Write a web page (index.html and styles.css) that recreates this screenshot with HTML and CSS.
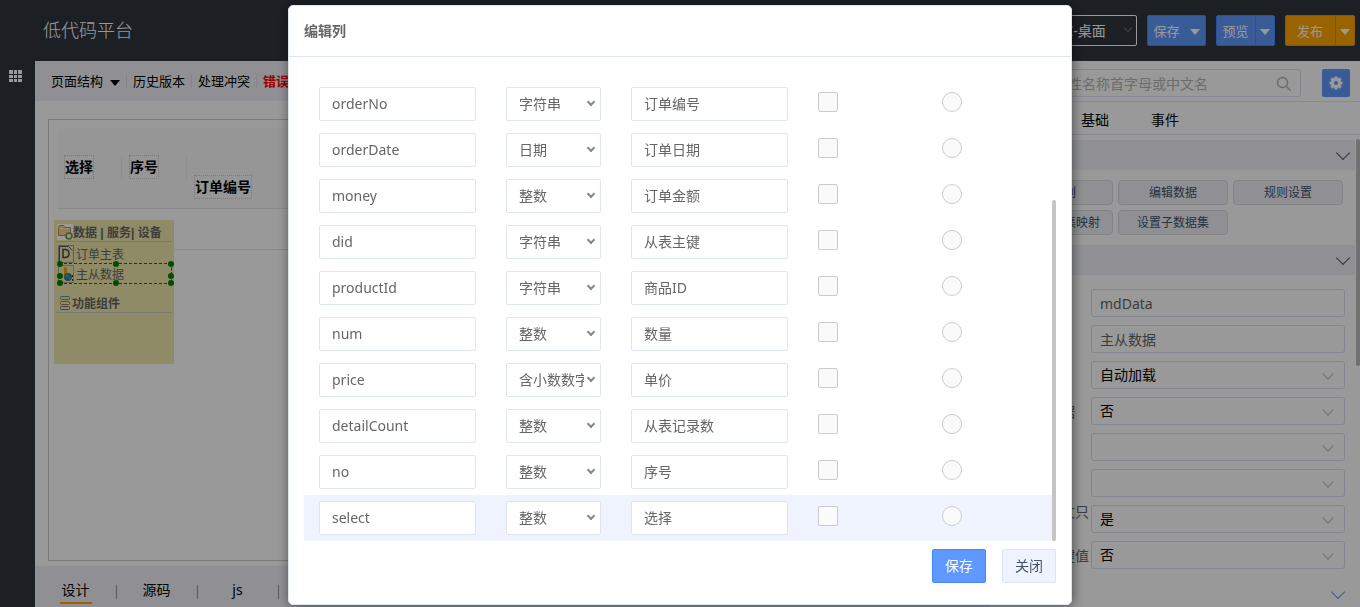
FILE: index.html
```html
<!DOCTYPE html>
<html lang="zh-CN">
<head>
  <meta charset="utf-8">
  <title>低代码平台</title>
  <link rel="stylesheet" href="styles.css">
</head>
<body>
  <header class="header">
    <h1 class="logo">低代码平台</h1>
    <div class="header-actions">
      <div class="select-box dark">
        <select aria-label="页面类型">
          <option>PC-桌面</option>
        </select>
      </div>
      <div class="split-button">
        <button type="button">保存</button>
        <button type="button" class="caret" aria-label="更多保存"></button>
      </div>
      <div class="split-button divided">
        <button type="button">预览</button>
        <button type="button" class="caret" aria-label="更多预览"></button>
      </div>
      <div class="split-button divided orange">
        <button type="button">发布</button>
        <button type="button" class="caret" aria-label="更多发布"></button>
      </div>
    </div>
  </header>

  <div class="main">
    <nav class="sidebar">
      <button type="button" aria-label="菜单">
        <svg width="13" height="13" viewBox="0 0 13 13" fill="#fff">
          <path d="M0 0h4v4H0zM5 0h3v4H5zM9 0h4v4H9zM0 5h4v3H0zM5 5h3v3H5zM9 5h4v3H9zM0 9h4v3H0zM5 9h3v3H5zM9 9h4v3H9z"/>
        </svg>
      </button>
    </nav>

    <section class="workspace">
      <div class="toolbar">
        <a href="#" class="with-caret">页面结构</a>
        <a href="#">历史版本</a>
        <a href="#">处理冲突</a>
        <a href="#" class="error">错误</a>
      </div>

      <div class="canvas">
        <div class="grid-head">
          <div class="grid-col"><span>选择</span></div>
          <div class="grid-col"><span>序号</span></div>
          <div class="grid-col last"><span>订单编号</span></div>
        </div>
        <div class="grid-row"></div>

        <!-- Panneau flottant des composants de données -->
        <div class="data-panel">
          <h2 class="data-title">
            <svg width="16" height="16" viewBox="0 0 16 16">
              <path fill="#fff" d="M0 0h16v16H0z"/>
              <path fill="#f7cf8b" stroke="#b78a45" d="M1.500 11.500v-8l1-2h4l1 2h6v8z"/>
              <path fill="none" stroke="#fff0c8" d="M2.500 4.500h10"/>
              <circle cx="12" cy="12" r="3" fill="#e4f3d6" stroke="#639648" stroke-width="1.500"/>
            </svg>
            数据 | 服务| 设备
          </h2>
          <ul class="data-list">
            <li>
              <svg width="16" height="18" viewBox="0 0 16 18">
                <path fill="#eee8aa" stroke="#999" d="M.5.5h15v17H.5z"/>
                <path fill="none" stroke="#555" d="M1.500 17V1.500h9l4 4"/>
                <path fill="none" stroke="#444" stroke-width="1.500" d="M5 4.500v8h2q4 0 4-4t-4-4z"/>
              </svg>
              订单主表
            </li>
            <li class="selected">
              <svg width="16" height="18" viewBox="0 0 16 18">
                <path fill="#eee8aa" stroke="#aaa" d="M.5.5h15v17H.5z"/>
                <path fill="#e8a51d" d="M4 1l5 2v7H4z"/>
                <path fill="#ffe28c" d="M4 1h2v9H4z"/>
                <circle cx="10" cy="12" r="4" fill="#3375ad"/>
                <path fill="#59a848" d="M8 9l3 1-1 3-3-1zM11 12l3 1-3 3z"/>
                <path fill="#333" d="M14 10h1v2h-1zM14 14h1v2h-1z"/>
              </svg>
              主从数据
              <i class="handle nw"></i><i class="handle n"></i><i class="handle ne"></i>
              <i class="handle w"></i><i class="handle e"></i>
              <i class="handle sw"></i><i class="handle s"></i><i class="handle se"></i>
            </li>
          </ul>
          <h2 class="data-title tools">
            <svg width="10" height="14" viewBox="0 0 10 14" fill="none">
              <rect x=".5" y=".5" width="9" height="3" rx="1" stroke="#4c968a"/>
              <rect x=".5" y="5.500" width="9" height="3" rx="1" stroke="#b27824"/>
              <rect x=".5" y="10.500" width="9" height="3" rx="1" stroke="#566eb5"/>
            </svg>
            功能组件
          </h2>
        </div>
      </div>

      <div class="view-tabs">
        <a href="#" class="active"><span>设计</span></a>
        <a href="#"><span>源码</span></a>
        <a href="#"><span>js</span></a>
        <a href="#"><span>css</span></a>
      </div>
    </section>

    <aside class="props">
      <div class="search-row">
        <div class="search">
          <input type="text" placeholder="请输入属性名称首字母或中文名" aria-label="搜索属性">
          <svg width="16" height="16" viewBox="0 0 16 16" fill="none" stroke="#b5b5b5" stroke-width="1.500">
            <circle cx="6.500" cy="6.500" r="5"/>
            <path d="M10.500 10.500l4 4"/>
          </svg>
        </div>
        <button type="button" class="gear" aria-label="设置">
          <svg width="14" height="14" viewBox="0 0 14 14">
            <g stroke="#fff" stroke-width="3">
              <path d="M7 .5v13M.5 7h13M2.400 2.400l9.200 9.200M11.600 2.400l-9.200 9.200"/>
            </g>
            <circle cx="7" cy="7" r="5" fill="#fff"/>
            <circle cx="7" cy="7" r="2" fill="#5f99ff"/>
          </svg>
        </button>
      </div>
      <div class="prop-tabs">
        <a href="#">常用</a>
        <a href="#">基础</a>
        <a href="#">事件</a>
      </div>
      <div class="prop-body">
        <div class="section-head"><i class="chevron"></i></div>
        <div class="prop-buttons">
          <button type="button">编辑列</button>
          <button type="button">编辑数据</button>
          <button type="button">规则设置</button>
          <button type="button">设置数据集映射</button>
          <button type="button">设置子数据集</button>
        </div>
        <div class="section-head"><i class="chevron"></i></div>
        <div class="prop-form">
          <label for="propId">标识</label>
          <input type="text" id="propId" value="mdData">
          <label for="propName">名称</label>
          <input type="text" id="propName" value="主从数据">
          <label for="propLoad">加载方式</label>
          <div class="select-box"><select id="propLoad"><option>自动加载</option></select></div>
          <label for="propEmpty">允许空数据</label>
          <div class="select-box"><select id="propEmpty"><option>否</option></select></div>
          <label for="propMaster">主数据</label>
          <div class="select-box"><select id="propMaster"><option></option></select></div>
          <label for="propRelation">关联列</label>
          <div class="select-box"><select id="propRelation"><option></option></select></div>
          <label for="propReadonly">数据集中文只读</label>
          <div class="select-box"><select id="propReadonly"><option>是</option></select></div>
          <label for="propKey" class="short">主键值</label>
          <div class="select-box"><select id="propKey"><option>否</option></select></div>
        </div>
        <div class="more"><i class="chevron"></i></div>
        <div class="prop-scroll"></div>
      </div>
    </aside>
  </div>

  <!-- Fenêtre d'édition des colonnes -->
  <div class="overlay">
    <div class="dialog" role="dialog" aria-labelledby="dialogTitle">
      <h2 class="dialog-title" id="dialogTitle">编辑列</h2>
      <div class="dialog-body">
        <table class="columns">
          <colgroup>
            <col class="col-name"><col class="col-type"><col class="col-label"><col class="col-check"><col>
          </colgroup>
          <tbody>
            <tr>
              <td><input type="text" value="orderNo" aria-label="列名"></td>
              <td><div class="type-box"><select aria-label="类型"><option>字符串</option></select></div></td>
              <td><input type="text" value="订单编号" aria-label="显示名称"></td>
              <td class="pick"><input type="checkbox" aria-label="只读"></td>
              <td class="pick"><input type="radio" name="idColumn" aria-label="主键"></td>
            </tr>
            <tr>
              <td><input type="text" value="orderDate" aria-label="列名"></td>
              <td><div class="type-box"><select aria-label="类型"><option>日期</option></select></div></td>
              <td><input type="text" value="订单日期" aria-label="显示名称"></td>
              <td class="pick"><input type="checkbox" aria-label="只读"></td>
              <td class="pick"><input type="radio" name="idColumn" aria-label="主键"></td>
            </tr>
            <tr>
              <td><input type="text" value="money" aria-label="列名"></td>
              <td><div class="type-box"><select aria-label="类型"><option>整数</option></select></div></td>
              <td><input type="text" value="订单金额" aria-label="显示名称"></td>
              <td class="pick"><input type="checkbox" aria-label="只读"></td>
              <td class="pick"><input type="radio" name="idColumn" aria-label="主键"></td>
            </tr>
            <tr>
              <td><input type="text" value="did" aria-label="列名"></td>
              <td><div class="type-box"><select aria-label="类型"><option>字符串</option></select></div></td>
              <td><input type="text" value="从表主键" aria-label="显示名称"></td>
              <td class="pick"><input type="checkbox" aria-label="只读"></td>
              <td class="pick"><input type="radio" name="idColumn" aria-label="主键"></td>
            </tr>
            <tr>
              <td><input type="text" value="productId" aria-label="列名"></td>
              <td><div class="type-box"><select aria-label="类型"><option>字符串</option></select></div></td>
              <td><input type="text" value="商品ID" aria-label="显示名称"></td>
              <td class="pick"><input type="checkbox" aria-label="只读"></td>
              <td class="pick"><input type="radio" name="idColumn" aria-label="主键"></td>
            </tr>
            <tr>
              <td><input type="text" value="num" aria-label="列名"></td>
              <td><div class="type-box"><select aria-label="类型"><option>整数</option></select></div></td>
              <td><input type="text" value="数量" aria-label="显示名称"></td>
              <td class="pick"><input type="checkbox" aria-label="只读"></td>
              <td class="pick"><input type="radio" name="idColumn" aria-label="主键"></td>
            </tr>
            <tr>
              <td><input type="text" value="price" aria-label="列名"></td>
              <td><div class="type-box"><select aria-label="类型"><option>含小数数字</option></select></div></td>
              <td><input type="text" value="单价" aria-label="显示名称"></td>
              <td class="pick"><input type="checkbox" aria-label="只读"></td>
              <td class="pick"><input type="radio" name="idColumn" aria-label="主键"></td>
            </tr>
            <tr>
              <td><input type="text" value="detailCount" aria-label="列名"></td>
              <td><div class="type-box"><select aria-label="类型"><option>整数</option></select></div></td>
              <td><input type="text" value="从表记录数" aria-label="显示名称"></td>
              <td class="pick"><input type="checkbox" aria-label="只读"></td>
              <td class="pick"><input type="radio" name="idColumn" aria-label="主键"></td>
            </tr>
            <tr>
              <td><input type="text" value="no" aria-label="列名"></td>
              <td><div class="type-box"><select aria-label="类型"><option>整数</option></select></div></td>
              <td><input type="text" value="序号" aria-label="显示名称"></td>
              <td class="pick"><input type="checkbox" aria-label="只读"></td>
              <td class="pick"><input type="radio" name="idColumn" aria-label="主键"></td>
            </tr>
            <tr class="current">
              <td><input type="text" value="select" aria-label="列名"></td>
              <td><div class="type-box"><select aria-label="类型"><option>整数</option></select></div></td>
              <td><input type="text" value="选择" aria-label="显示名称"></td>
              <td class="pick"><input type="checkbox" aria-label="只读"></td>
              <td class="pick"><input type="radio" name="idColumn" aria-label="主键"></td>
            </tr>
          </tbody>
        </table>
        <div class="dialog-scroll"></div>
      </div>
      <div class="dialog-footer">
        <button type="button" class="primary">保存</button>
        <button type="button">关闭</button>
      </div>
    </div>
  </div>
</body>
</html>
```
FILE: styles.css
```css
*, *::before, *::after {
  box-sizing: border-box;
}

body {
  margin: 0;
  height: 100vh;
  display: flex;
  flex-direction: column;
  overflow: hidden;
  font-family: "Noto Sans", "Noto Sans CJK SC", sans-serif;
  font-size: 14px;
  color: #000;
  background: #fff;
}

button, input, select {
  font-family: inherit;
  font-size: inherit;
  margin: 0;
}

a {
  color: inherit;
  text-decoration: none;
}

select {
  appearance: none;
  display: block;
  width: 100%;
}

/* En-tête */
.header {
  display: flex;
  justify-content: space-between;
  align-items: center;
  flex: none;
  height: 61px;
  padding: 0 5px 0 43px;
  background: #2f343c;
  color: #fff;
}

.logo {
  margin: 0;
  padding-bottom: 3px;
  font-size: 18px;
  font-weight: 300;
}

.header-actions {
  display: flex;
  gap: 10px;
}

.split-button {
  display: flex;
  height: 31px;
  border: 1px solid #4587ff;
  border-radius: 2px;
  background: #5f99ff;
}

.split-button button {
  width: 38px;
  padding: 0 1px 1px 0;
  border: 0;
  background: none;
  color: #fff;
  font-size: 13px;
}

.split-button .caret {
  width: 19px;
}

.split-button.orange {
  background: #ffa500;
  border-color: #e29400;
}

.split-button.orange button:first-child {
  width: 49px;
}

.split-button.divided .caret {
  border-left: 1px solid #4587ff;
}

.split-button.orange .caret {
  border-color: #d48b00;
}

.caret::before, .with-caret::after {
  content: "";
  display: inline-block;
  border: 5px solid transparent;
  border-top: 6px solid;
  border-bottom: 0;
  vertical-align: middle;
}

.select-box {
  position: relative;
}

.select-box::after {
  content: "";
  position: absolute;
  right: 13px;
  top: 9px;
  width: 8px;
  height: 8px;
  border: solid #bbb;
  border-width: 0 1px 1px 0;
  transform: rotate(45deg);
}

.select-box.dark {
  width: 120px;
}

.select-box.dark::after {
  right: 6px;
  top: 10px;
  width: 6px;
  height: 6px;
  border-color: #6b6f76;
}

.select-box.dark select {
  height: 31px;
  padding: 0 12px 0 38px;
  border: 1px solid #fff;
  border-radius: 2px;
  background: none;
  color: #fff;
}

.main {
  display: flex;
  flex: 1;
  min-height: 0;
}

.sidebar {
  flex: none;
  width: 35px;
  padding: 9px;
  background: #2f343c;
}

.sidebar button {
  display: block;
  padding: 0;
  border: 0;
  background: none;
}

.sidebar svg {
  display: block;
}

/* Zone de travail */
.workspace {
  display: flex;
  flex-direction: column;
  flex: 1;
  min-width: 0;
}

.toolbar {
  display: flex;
  align-items: center;
  flex: none;
  height: 40px;
  padding-left: 9px;
  background: #f0f1f7;
  font-size: 13px;
}

.toolbar a {
  padding: 0 6px;
  line-height: 14px;
  border-right: 1px solid #dcdfe8;
}

.toolbar .with-caret {
  padding-left: 7px;
}

.with-caret::after {
  margin-left: 7px;
}

.toolbar .error {
  color: #f00;
  font-weight: bold;
  border: 0;
}

.canvas {
  position: relative;
  flex: 1;
  margin: 18px 13px 5px;
  padding: 8px;
  border: 1px solid #ccc;
}

.grid-head {
  display: flex;
  height: 81px;
  padding: 27px 7px;
  border-bottom: 1px solid #e4e4e4;
  border-radius: 6px 6px 0 0;
  background: #fafafa;
  font-weight: bold;
}

.grid-col {
  width: 65px;
  height: 24px;
}

.grid-col:not(.last) {
  background: linear-gradient(#ebebeb, #ebebeb) 57px 2px / 1px 22px no-repeat;
}

.grid-col span {
  display: inline-block;
  line-height: 22px;
  border: 1px dotted #ccc;
  white-space: nowrap;
}

.grid-col.last {
  padding-top: 20px;
}

.grid-row {
  height: 41px;
  border-bottom: 1px solid #e4e4e4;
}

.data-panel {
  position: absolute;
  left: 5px;
  top: 100px;
  width: 120px;
  height: 144px;
  padding: 2px;
  background: #eee8aa;
  color: #666;
  font-size: 12px;
}

.data-title {
  display: flex;
  align-items: center;
  margin: 0;
  height: 20px;
  padding-left: 1px;
  border-bottom: 1px solid #ccc;
  font-family: "Liberation Sans", "Noto Sans CJK SC", sans-serif;
  font-size: 12px;
  white-space: nowrap;
}

.data-title.tools {
  margin-top: 9px;
  padding-left: 4px;
  gap: 2px;
}

.data-list {
  margin: 0;
  padding: 3px 0 0 2px;
  list-style: none;
}

.data-list li {
  display: flex;
  align-items: center;
  gap: 2px;
  height: 18px;
}

.data-list .selected {
  position: relative;
  height: 21px;
  width: 113px;
  margin-left: 1px;
  border: 1px dashed #f00;
}

.data-list .selected svg {
  margin-left: -2px;
}

.handle {
  position: absolute;
  width: 6px;
  height: 6px;
  border-radius: 50%;
  background: #008000;
}

.nw, .w, .sw { left: -3px; }
.n, .s { left: 53px; }
.ne, .e, .se { right: -3px; }
.nw, .n, .ne { top: -3px; }
.w, .e { top: 9px; }
.sw, .s, .se { bottom: -3px; }

.view-tabs {
  display: flex;
  flex: none;
  height: 41px;
  background: #f0f1f7;
}

.view-tabs a {
  position: relative;
  width: 81px;
  padding-top: 9px;
  text-align: center;
}

.view-tabs a + a::before {
  content: "";
  position: absolute;
  left: 0;
  top: 19px;
  height: 14px;
  border-left: 1px solid #999;
}

.view-tabs span {
  display: inline-block;
  height: 29px;
  line-height: 29px;
  padding: 0 2px;
}

.view-tabs .active span {
  border-bottom: 2px solid #ffa500;
}

/* Panneau des propriétés */
.props {
  display: flex;
  flex-direction: column;
  flex: none;
  width: 372px;
  border-left: 1px solid #dfe5f3;
}

.search-row {
  display: flex;
  justify-content: space-between;
  flex: none;
  height: 41px;
  padding: 8px 10px 0 14px;
  border-bottom: 1px solid #dfe5f3;
}

.search {
  position: relative;
  width: 298px;
}

.search input, .prop-form input, .prop-form select {
  width: 100%;
  height: 28px;
  padding: 0 8px;
  border: 1px solid #dcdfee;
  border-radius: 3px;
  background: #fff;
}

.search input::placeholder {
  color: #b5b5b5;
}

.search svg {
  position: absolute;
  right: 9px;
  top: 7px;
}

.gear {
  display: flex;
  align-items: center;
  justify-content: center;
  width: 28px;
  height: 28px;
  padding: 0;
  border: 0;
  border-radius: 2px;
  background: #5f99ff;
}

.prop-tabs {
  display: flex;
  flex: none;
  height: 33px;
  line-height: 36px;
  padding-left: 22px;
  border-bottom: 1px solid #dfe5f3;
}

.prop-tabs a {
  width: 70px;
}

.prop-body {
  position: relative;
  flex: 1;
  min-height: 0;
  padding: 5px 5px 0 0;
}

.section-head {
  position: relative;
  height: 30px;
  background: #f0f1f7;
}

.chevron {
  position: absolute;
  right: 7px;
  top: 8px;
  width: 10px;
  height: 10px;
  border: solid #555;
  border-width: 0 1px 1px 0;
  transform: rotate(45deg);
}

.prop-buttons {
  display: grid;
  grid-template-columns: repeat(3, 1fr);
  gap: 5px;
  padding: 10px 12px 10px 14px;
}

.prop-buttons button {
  height: 25px;
  padding: 0 0 1px;
  border: 1px solid #d8dbe2;
  border-radius: 4px;
  background: #f0f1f7;
  color: #45526b;
  font-size: 12px;
}

.prop-form {
  display: grid;
  grid-template-columns: 86px 1fr;
  grid-auto-rows: 28px;
  row-gap: 8px;
  align-items: center;
  padding: 14px 10px 0 16px;
}

.prop-form label {
  width: 84px;
  line-height: 15px;
  color: #666;
}

.prop-form .short {
  text-align: right;
}

.prop-form input {
  color: #666;
}

.prop-form select {
  padding-bottom: 2px;
  color: #000;
}

.more {
  position: relative;
  height: 30px;
  margin-top: 10px;
}

.more .chevron {
  right: 12px;
  border-color: #5f99ff;
}

.prop-scroll {
  position: absolute;
  right: 0;
  top: 4px;
  width: 4px;
  height: 227px;
  border-radius: 2px;
  background: #bbb;
}

/* Fenêtre modale */
.overlay {
  position: fixed;
  inset: 0;
  display: flex;
  justify-content: center;
  align-items: flex-start;
  padding-top: 5px;
  background: rgba(0, 0, 0, 0.4);
}

.dialog {
  width: 784px;
  max-width: 96%;
  border: 1px solid #dfe5f3;
  border-radius: 5px;
  background: #fff;
  box-shadow: 1px 1px 12px rgba(0, 0, 0, 0.5);
  color: #666;
}

.dialog-title {
  margin: 0;
  padding: 0 15px;
  font-size: 14px;
  line-height: 50px;
  border-bottom: 1px solid #dfe5f3;
}

.dialog-body {
  position: relative;
  padding: 24px 15px 0;
}

.columns {
  width: 100%;
  border-collapse: collapse;
  table-layout: fixed;
}

.col-name, .col-label {
  width: 187px;
}

.col-type {
  width: 125px;
}

.col-check {
  width: 124px;
}

.columns td {
  height: 46px;
  padding: 6px 15px;
  vertical-align: top;
}

.columns .pick {
  padding-top: 11px;
}

.columns .current {
  background: #eff3fd;
}

.columns input[type="text"], .columns select {
  display: block;
  width: 100%;
  height: 34px;
  padding: 0 12px 2px;
  border: 1px solid #dfe5f3;
  border-radius: 2px;
  background: #fff;
  color: #666;
}

.columns select {
  padding-right: 16px;
}

.type-box {
  position: relative;
}

.type-box::after {
  content: "";
  position: absolute;
  right: 7px;
  top: 12px;
  width: 6px;
  height: 6px;
  border: solid #888;
  border-width: 0 2px 2px 0;
  transform: rotate(45deg);
}

.pick input {
  appearance: none;
  display: block;
  width: 20px;
  height: 20px;
  border: 1px solid #ccc;
  border-radius: 2px;
  background: #fafafa;
}

.pick input[type="radio"] {
  border-radius: 50%;
}

.dialog-scroll {
  position: absolute;
  right: 15px;
  bottom: 0;
  width: 4px;
  height: 341px;
  border-radius: 2px;
  background: #c4c4c4;
}

.dialog-footer {
  display: flex;
  justify-content: flex-end;
  gap: 16px;
  padding: 8px 15px 21px;
}

.dialog-footer button {
  width: 54px;
  height: 34px;
  padding: 0 0 2px;
  border: 1px solid #dfe5f3;
  border-radius: 2px;
  background: #eff3fd;
  color: #45526b;
}

.dialog-footer .primary {
  border-color: #4587ff;
  background: #5f99ff;
  color: #fff;
}
```
